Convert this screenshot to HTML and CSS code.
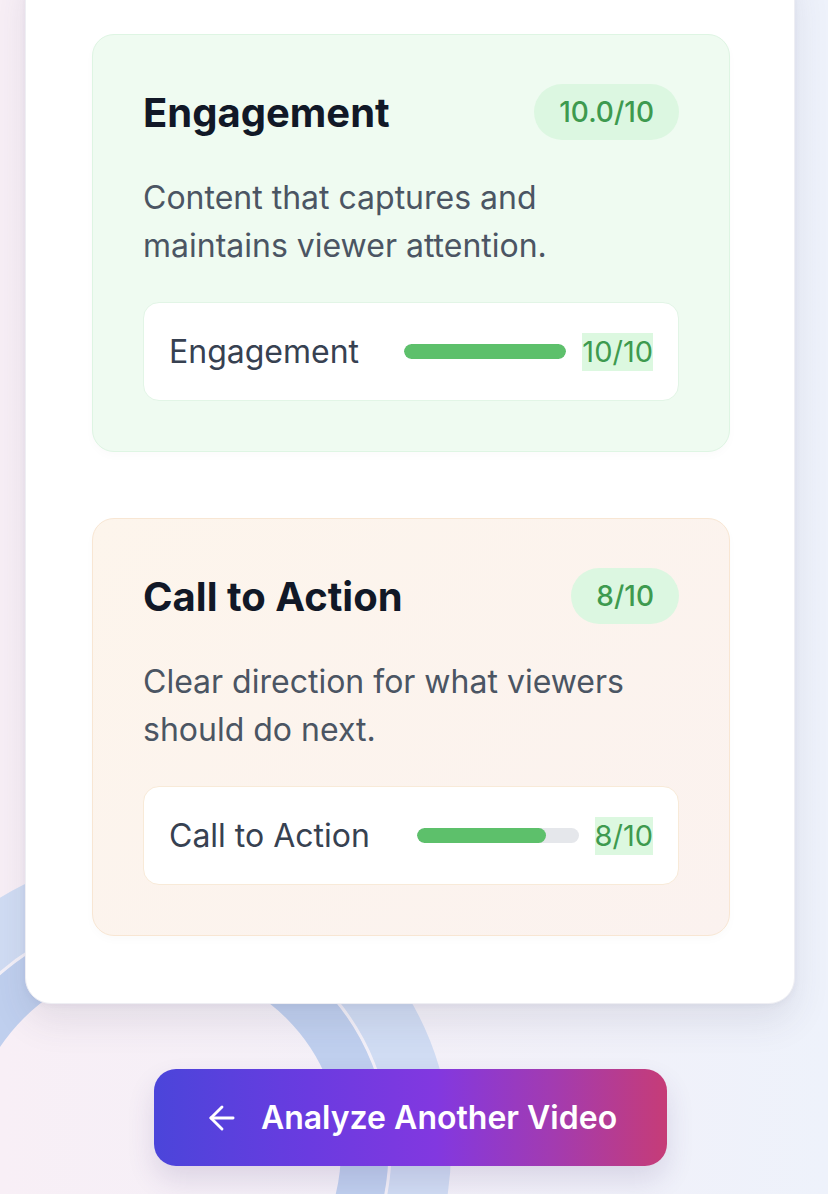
FILE: index.html
```html
<!DOCTYPE html>
<html lang="en">
<head>
<meta charset="utf-8">
<title>Analysis Results</title>
<link rel="stylesheet" href="styles.css">
</head>
<body>
<svg class="bg-rings" width="828" height="1194" viewBox="0 0 828 1194" aria-hidden="true">
  <circle cx="155" cy="1150" r="210" fill="none" stroke="#bfcfee" stroke-width="48"/>
  <circle cx="155" cy="1150" r="266" fill="none" stroke="#d0dcf3" stroke-width="60"/>
  <circle cx="155" cy="1150" r="235" fill="none" stroke="#f3f0f8" stroke-width="3"/>
</svg>
<main class="page">
  <section class="results-card">
    <article class="metric metric-green">
      <header class="metric-head">
        <h2 class="metric-title">Engagement</h2>
        <span class="badge">10.0/10</span>
      </header>
      <p class="metric-desc">Content that captures and maintains viewer attention.</p>
      <div class="score-row">
        <span class="score-label">Engagement</span>
        <div class="score-right">
          <div class="bar"><div class="bar-fill" style="width:100%"></div></div>
          <span class="score-value">10/10</span>
        </div>
      </div>
    </article>
    <article class="metric metric-peach">
      <header class="metric-head">
        <h2 class="metric-title">Call to Action</h2>
        <span class="badge">8/10</span>
      </header>
      <p class="metric-desc">Clear direction for what viewers should do next.</p>
      <div class="score-row">
        <span class="score-label">Call to Action</span>
        <div class="score-right">
          <div class="bar"><div class="bar-fill" style="width:80%"></div></div>
          <span class="score-value">8/10</span>
        </div>
      </div>
    </article>
  </section>
  <div class="actions">
    <button class="btn-primary" type="button">
      <svg class="btn-icon" width="38" height="38" viewBox="0 0 24 24" fill="none" stroke="currentColor" stroke-width="1.8" stroke-linecap="round" stroke-linejoin="round" aria-hidden="true"><path d="M19 12H5"/><path d="M12 19l-7-7 7-7"/></svg>
      <span>Analyze Another Video</span>
    </button>
  </div>
</main>
</body>
</html>
```

FILE: styles.css
```css
* { box-sizing: border-box; }

html, body {
  margin: 0;
  padding: 0;
}

body {
  width: 828px;
  height: 1194px;
  overflow: hidden;
  position: relative;
  font-family: Inter, "Noto Sans", "Liberation Sans", sans-serif;
  background: linear-gradient(90deg, #f8eff6 0%, #f3f0f8 50%, #eef2fb 100%);
}

.bg-rings {
  position: absolute;
  left: 0;
  top: 0;
  z-index: 0;
}

.page {
  position: relative;
  z-index: 1;
  width: 770px;
  margin-left: 25px;
}

.results-card {
  margin-top: -40px;
  background: #ffffff;
  border-radius: 26px;
  padding: 73px 64px 67px 66px;
  display: flex;
  flex-direction: column;
  gap: 66px;
  box-shadow: 0 18px 36px rgba(60, 60, 90, 0.10), 0 2px 6px rgba(60, 60, 90, 0.05);
  border: 1px solid #eeeef3;
}

.metric {
  border-radius: 22px;
  padding: 49px 50px 50px 50px;
  border: 1.5px solid transparent;
  box-shadow: 0 4px 10px rgba(0, 0, 0, 0.02);
}

.metric-green {
  background: #effbf1;
  border-color: #def5e3;
}

.metric-peach {
  background: linear-gradient(135deg, #fdf5ec 0%, #fbf2ef 100%);
  border-color: #f8e6d3;
}

.metric-head {
  display: flex;
  align-items: center;
  justify-content: space-between;
  height: 56px;
}

.metric-title {
  margin: 0;
  font-size: 40px;
  font-weight: 700;
  color: #111827;
  letter-spacing: 0;
}

.badge {
  display: inline-flex;
  align-items: center;
  height: 56px;
  padding: 0 25px;
  border-radius: 28px;
  background: #dcf7e1;
  color: #3e9a4f;
  font-size: 28px;
  font-weight: 500;
}

.metric-desc {
  margin: 34px 0 32px 0;
  font-size: 32px;
  line-height: 48px;
  color: #4b5563;
}

.score-row {
  display: flex;
  align-items: center;
  justify-content: space-between;
  height: 99px;
  padding: 0 25px;
  background: #ffffff;
  border-radius: 16px;
  border: 1.5px solid #e2f5e6;
}

.metric-peach .score-row {
  border-color: #f8ead8;
}

.score-label {
  font-size: 32px;
  color: #374151;
}

.score-right {
  display: flex;
  align-items: center;
  gap: 16px;
}

.bar {
  width: 162px;
  height: 15px;
  border-radius: 8px;
  background: #e5e7eb;
  overflow: hidden;
}

.bar-fill {
  height: 100%;
  border-radius: 8px;
  background: #5dc06b;
}

.score-value {
  font-size: 29px;
  line-height: 38px;
  color: #3e9a4f;
  background: #dcf8e0;
}

.actions {
  display: flex;
  justify-content: center;
  margin-top: 65px;
}

.btn-primary {
  display: inline-flex;
  align-items: center;
  gap: 20px;
  height: 97px;
  width: 513px;
  justify-content: center;
  border: none;
  border-radius: 22px;
  color: #ffffff;
  font-family: Inter, "Noto Sans", "Liberation Sans", sans-serif;
  font-size: 32px;
  font-weight: 600;
  background: linear-gradient(90deg, #4b45da 0%, #6a3be0 30%, #8238e0 55%, #a33bb0 78%, #c63c77 100%);
  box-shadow: 0 14px 28px rgba(70, 50, 120, 0.14);
  padding: 0;
}

.btn-icon {
  flex: none;
}
```
